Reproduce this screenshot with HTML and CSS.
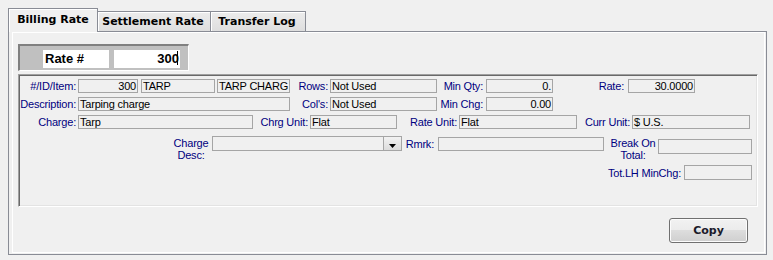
FILE: index.html
```html
<!DOCTYPE html>
<html lang="en">
<head>
  <meta charset="UTF-8" />
  <title>Rate Maintenance</title>
  <link rel="stylesheet" href="styles.css">
</head>
<body>

  <div class="tabs">
    <div class="tab active">Billing Rate</div>
    <div class="tab">Settlement Rate</div>
    <div class="tab">Transfer Log</div>
  </div>

  <div class="panel">
    <div class="panel-inner">

      <!-- Rate number header -->
      <div class="rate-bar">
        <div class="rate-cell">Rate #</div>
        <div class="rate-cell num">300<span class="caret"></span></div>
      </div>

      <!-- Rate detail fields -->
      <div class="fields">
        <div class="row">
          <span class="lbl l-item">#/ID/Item:</span>
          <span class="fld f-num num">300</span>
          <span class="fld f-code">TARP</span>
          <span class="fld f-short">TARP CHARG</span>
          <span class="lbl l-rows">Rows:</span>
          <span class="fld f-rows">Not Used</span>
          <span class="lbl l-min">Min Qty:</span>
          <span class="fld f-min num">0.</span>
          <span class="lbl l-rate">Rate:</span>
          <span class="fld f-rate num">30.0000</span>
        </div>
        <div class="row">
          <span class="lbl l-item">Description:</span>
          <span class="fld f-desc">Tarping charge</span>
          <span class="lbl l-rows">Col's:</span>
          <span class="fld f-rows">Not Used</span>
          <span class="lbl l-min">Min Chg:</span>
          <span class="fld f-min num">0.00</span>
        </div>
        <div class="row">
          <span class="lbl l-item">Charge:</span>
          <span class="fld f-charge">Tarp</span>
          <span class="lbl l-chrg">Chrg Unit:</span>
          <span class="fld f-chrg">Flat</span>
          <span class="lbl l-runit">Rate Unit:</span>
          <span class="fld f-unit">Flat</span>
          <span class="lbl l-curr">Curr Unit:</span>
          <span class="fld f-unit">$ U.S.</span>
        </div>
        <div class="row tall">
          <span class="lbl2 l-cdesc">Charge<br>Desc:</span>
          <span class="combo">
            <span class="combo-btn">
              <svg width="7" height="4" viewBox="0 0 7 4"><path d="M0 0h7L3.5 4z" fill="#000"/></svg>
            </span>
          </span>
          <span class="lbl l-rmrk">Rmrk:</span>
          <span class="fld f-rmrk"></span>
          <span class="lbl2 l-break">Break On<br>Total:</span>
          <span class="fld f-break"></span>
        </div>
        <div class="row last">
          <span class="lbl l-tot">Tot.LH MinChg:</span>
          <span class="fld f-tot"></span>
        </div>
      </div>

      <div class="actions">
        <button class="btn">Copy</button>
      </div>

    </div>
  </div>

</body>
</html>
```

FILE: styles.css
```css
* {
  box-sizing: border-box;
}
body {
  margin: 0;
  width: 773px;
  height: 260px;
  overflow: hidden;
  background: #f0f0f0;
  font-family: "Liberation Sans", Arial, sans-serif;
  font-size: 11px;
  color: #000;
}

/* tab strip */
.tabs {
  display: flex;
  align-items: flex-end;
  padding: 8px 0 0 8px;
}
.tab {
  height: 20px;
  padding-top: 3px;
  border: 1px solid #898c95;
  border-bottom: none;
  background: linear-gradient(#ececec, #dedede);
  box-shadow: inset 1px 1px 0 #fff;
  font-family: "DejaVu Sans", Verdana, sans-serif;
  font-weight: bold;
  font-size: 11px;
  line-height: 13px;
  text-align: center;
}
.tab:nth-child(2) { width: 114px; margin-left: -1px; padding-right: 2px; }
.tab:nth-child(3) { width: 96px; margin-left: -1px; padding-right: 2px; }
.tab.active {
  position: relative;
  z-index: 1;
  width: 90px;
  height: 24px;
  margin-bottom: -1px;
  padding-top: 4px;
  background: #f0f0f0;
}

/* outer tab page */
.panel {
  height: 224px;
  margin: 0 6px 0 8px;
  border: 1px solid #898c95;
}
.panel-inner {
  height: 221px;
  margin: 0 1px 1px 3px;
  border: 1px solid #fff;
}

/* Rate # header */
.rate-bar {
  display: flex;
  gap: 5px;
  width: 171px;
  height: 27px;
  margin: 11px 0 0 5px;
  padding: 4px 0 0 23px;
  background: #c0c0c0;
  border-top: 2px solid #808080;
  border-left: 2px solid #808080;
  border-right: 1px solid #fff;
  border-bottom: 1px solid #fff;
}
.rate-cell {
  width: 66px;
  height: 18px;
  padding: 0 2px;
  background: #fff;
  font-weight: bold;
  font-size: 13px;
  line-height: 18px;
}
.caret {
  display: inline-block;
  width: 1px;
  height: 14px;
  margin-left: -2px;
  vertical-align: -2px;
  background: #000;
}

/* field frame */
.fields {
  width: 740px;
  height: 133px;
  margin: 3px 0 0 5px;
  padding: 4px 0 0 1px;
  border-top: 1px solid #a0a0a0;
  border-left: 1px solid #a0a0a0;
  border-right: 1px solid #fff;
  border-bottom: 1px solid #fff;
  box-shadow: inset 1px 1px 0 #696969, inset -1px -1px 0 #e3e3e3;
  letter-spacing: -0.2px;
}
.row {
  display: flex;
  align-items: center;
  height: 14px;
  margin-bottom: 4px;
}
.row.tall {
  align-items: flex-start;
  height: 24px;
  margin-top: 7px;
  margin-bottom: 5px;
}
.row.last {
  height: 15px;
}

.lbl {
  flex: none;
  padding-right: 2px;
  color: #000080;
  text-align: right;
  white-space: nowrap;
  line-height: 12px;
}
.lbl2 {
  flex: none;
  color: #000080;
  text-align: center;
  line-height: 12px;
}
.fld {
  flex: none;
  height: 14px;
  padding: 0 1px;
  border: 1px solid #a5a5a5;
  background: #f0f0f0;
  line-height: 12px;
  white-space: nowrap;
  overflow: hidden;
}
.num {
  text-align: right;
}

/* label widths */
.l-item { width: 58px; }
.l-rows { width: 40px; }
.l-min { width: 49px; padding-right: 3px; }
.l-rate { width: 75px; padding-right: 4px; }
.l-chrg { width: 57px; }
.l-runit { width: 62px; }
.l-curr { width: 55px; }
.l-cdesc { width: 42px; margin-left: 150px; margin-top: 1px; }
.l-rmrk { width: 36px; margin-top: 2px; padding-right: 4px; }
.l-break { width: 54px; padding-left: 4px; margin-top: 1px; }
.l-tot { width: 84px; margin-left: 580px; padding-right: 3px; }

/* field widths */
.f-num { width: 60px; }
.f-code { width: 74px; margin-left: 3px; }
.f-short { width: 73px; margin-left: 2px; }
.f-rows { width: 107px; }
.f-min { width: 67px; }
.f-rate { width: 67px; }
.f-desc { width: 212px; }
.f-charge { width: 175px; }
.f-chrg { width: 87px; }
.f-unit { width: 118px; }
.f-rmrk { width: 166px; margin-top: 1px; }
.f-break { width: 94px; height: 15px; margin-top: 3px; }
.f-tot { width: 68px; height: 15px; }

/* combo box */
.combo {
  display: flex;
  justify-content: flex-end;
  width: 190px;
  height: 15px;
  border: 1px solid #a5a5a5;
  background: #f0f0f0;
}
.combo-btn {
  display: flex;
  align-items: center;
  justify-content: center;
  width: 18px;
  padding-top: 4px;
  background: linear-gradient(#f2f2f2, #dcdcdc);
  border-left: 1px solid #a5a5a5;
}

/* buttons */
.actions {
  display: flex;
  justify-content: flex-end;
  margin-top: 11px;
  padding-right: 16px;
}
.btn {
  width: 79px;
  height: 25px;
  padding: 0;
  border: 1px solid #707070;
  border-radius: 3px;
  background: linear-gradient(#f2f2f2 0%, #ebebeb 50%, #dddddd 50%, #cfcfcf 100%);
  box-shadow: inset 0 0 0 1px #fcfcfc;
  font-family: "DejaVu Sans", Verdana, sans-serif;
  font-weight: bold;
  font-size: 11px;
  color: #1a1a2a;
}
```
